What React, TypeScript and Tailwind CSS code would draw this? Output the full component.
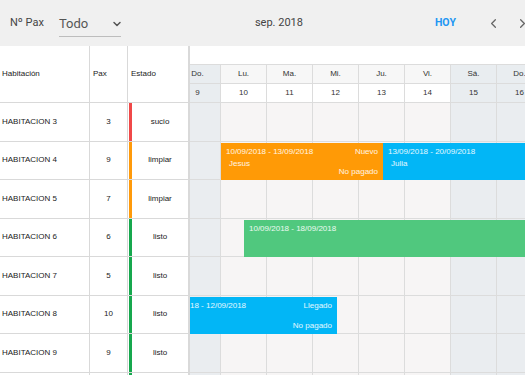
import React from "react";
import { ChevronDown, ChevronLeft, ChevronRight } from "lucide-react";

interface Room {
  name: string;
  pax: number | string;
  estado: string;
  bar: string;
}

interface Booking {
  left: number;
  top: number;
  width: number;
  color: string;
  dates: string;
  guest?: string;
  status?: string;
  paid?: string;
  clipped?: boolean;
}

const rooms: Room[] = [
  { name: "HABITACION 3", pax: 3, estado: "sucio", bar: "bg-[#f04848]" },
  { name: "HABITACION 4", pax: 9, estado: "limpiar", bar: "bg-[#ff9a0a]" },
  { name: "HABITACION 5", pax: 7, estado: "limpiar", bar: "bg-[#ff9a0a]" },
  { name: "HABITACION 6", pax: 6, estado: "listo", bar: "bg-[#16a84e]" },
  { name: "HABITACION 7", pax: 5, estado: "listo", bar: "bg-[#16a84e]" },
  { name: "HABITACION 8", pax: 10, estado: "listo", bar: "bg-[#16a84e]" },
  { name: "HABITACION 9", pax: 9, estado: "listo", bar: "bg-[#16a84e]" },
  // next row is only peeking in at the bottom edge
  { name: "", pax: "", estado: "", bar: "bg-[#16a84e]" },
];

const days = [
  { name: "Do.", num: 9, weekend: true },
  { name: "Lu.", num: 10, weekend: false },
  { name: "Ma.", num: 11, weekend: false },
  { name: "Mi.", num: 12, weekend: false },
  { name: "Ju.", num: 13, weekend: false },
  { name: "Vi.", num: 14, weekend: false },
  { name: "Sá.", num: 15, weekend: true },
  { name: "Do.", num: 16, weekend: true },
];

const ROW = 38.5;

const bookings: Booking[] = [
  { left: 46, top: ROW * 1 + 1, width: 162, color: "bg-[#ff9a06]", dates: "10/09/2018 - 13/09/2018", guest: "Jesus", status: "Nuevo", paid: "No pagado" },
  { left: 208, top: ROW * 1 + 1, width: 200, color: "bg-[#02b6f6]", dates: "13/09/2018 - 20/09/2018", guest: "Julia" },
  { left: 69, top: ROW * 3 + 1, width: 340, color: "bg-[#50c87e]", dates: "10/09/2018 - 18/09/2018" },
  { left: 15, top: ROW * 5 + 1, width: 147, color: "bg-[#02b6f6]", dates: "18 - 12/09/2018", status: "Llegado", paid: "No pagado", clipped: true },
];

export default function App() {
  return (
    <div className="w-[525px] h-[375px] overflow-hidden bg-white font-['Liberation_Sans',Arial,sans-serif] text-[#222]">
      {/* toolbar */}
      <div className="h-[46px] bg-[#f0f0f0] flex items-center font-['Roboto',sans-serif] whitespace-nowrap">
        <span className="ml-[10px] shrink-0 text-[11px] text-[#444]">Nº Pax</span>
        <div className="ml-[15px] shrink-0 w-[62px] h-[26px] mt-[2px] border-b border-[#bdbdbd] flex items-center justify-between">
          <span className="text-[13px] text-[#555]">Todo</span>
          <ChevronDown size={12} strokeWidth={3} className="text-[#555] mr-[-2px]" />
        </div>
        <span className="ml-[134px] shrink-0 text-[11px] text-[#444]">sep. 2018</span>
        <span className="ml-[132px] shrink-0 text-[10.5px] font-bold text-[#2196f3]">HOY</span>
        <ChevronLeft size={15} strokeWidth={2} className="ml-[30px] shrink-0 text-[#666]" />
        <ChevronRight size={15} strokeWidth={2} className="ml-[14px] shrink-0 text-[#666]" />
      </div>

      <div className="flex">
        {/* rooms table */}
        <div className="w-[190px] shrink-0 border-r-2 border-[#d9d9d9] text-[8px]">
          <div className="h-[57px] flex border-b border-[#d9d9d9]">
            <div className="w-[90px] border-r border-[#d9d9d9] flex items-center pl-[2px]">Habitación</div>
            <div className="w-[38px] border-r border-[#d9d9d9] flex items-center pl-[3px]">Pax</div>
            <div className="flex-1 flex items-center pl-[3px]">Estado</div>
          </div>
          {rooms.map((r, i) => (
            <div key={i} className="h-[38.5px] flex border-b border-[#d9d9d9]">
              <div className="w-[90px] border-r border-[#d9d9d9] flex items-center pl-[2px]">{r.name}</div>
              <div className="w-[38px] border-r border-[#d9d9d9] flex items-center justify-center">{r.pax}</div>
              <div className="flex-1 flex">
                <div className={`w-[3px] ml-[1px] ${r.bar}`}></div>
                <div className="flex-1 flex items-center justify-center">{r.estado}</div>
              </div>
            </div>
          ))}
        </div>

        {/* calendar */}
        <div className="flex-1 overflow-hidden">
          <div className="ml-[-15px] w-[368px] text-[8px] text-[#333]">
            <div className="h-[18px]"></div>
            <div className="flex h-[20px] border-t border-b border-[#dcdcdc]">
              {days.map((d, i) => (
                <div key={i} className={`w-[46px] shrink-0 border-r border-[#dcdcdc] flex items-center justify-center ${d.weekend ? "bg-[#e9edf0]" : "bg-[#f7f7f7]"}`}>
                  {d.name}
                </div>
              ))}
            </div>
            <div className="flex h-[19px] border-b border-[#dcdcdc]">
              {days.map((d, i) => (
                <div key={i} className={`w-[46px] shrink-0 border-r border-[#dcdcdc] flex items-center justify-center ${d.weekend ? "bg-[#e9edf0]" : "bg-white"}`}>
                  {d.num}
                </div>
              ))}
            </div>

            <div className="relative">
              {rooms.map((r, ri) => (
                <div key={ri} className="flex h-[38.5px]">
                  {days.map((d, i) => (
                    <div key={i} className={`w-[46px] shrink-0 border-r border-b border-[#dcdcdc] ${d.weekend ? "bg-[#eaedf0]" : "bg-[#f7f5f5]"}`}></div>
                  ))}
                </div>
              ))}

              {bookings.map((b, i) => (
                <div
                  key={i}
                  className={`absolute h-[37.5px] ${b.color} text-white/90 text-[8px] leading-none flex flex-col pr-[5px] pt-[5px] pb-[4px] ${b.clipped ? "pl-0" : "pl-[5px]"}`}
                  style={{ left: b.left, top: b.top, width: b.width }}
                >
                  <div className="flex justify-between whitespace-nowrap">
                    <span>{b.dates}</span>
                    {b.status && <span>{b.status}</span>}
                  </div>
                  {b.guest && <div className="mt-[4px] pl-[3px]">{b.guest}</div>}
                  {b.paid && <div className="mt-auto text-right">{b.paid}</div>}
                </div>
              ))}
            </div>
          </div>
        </div>
      </div>
    </div>
  );
}
